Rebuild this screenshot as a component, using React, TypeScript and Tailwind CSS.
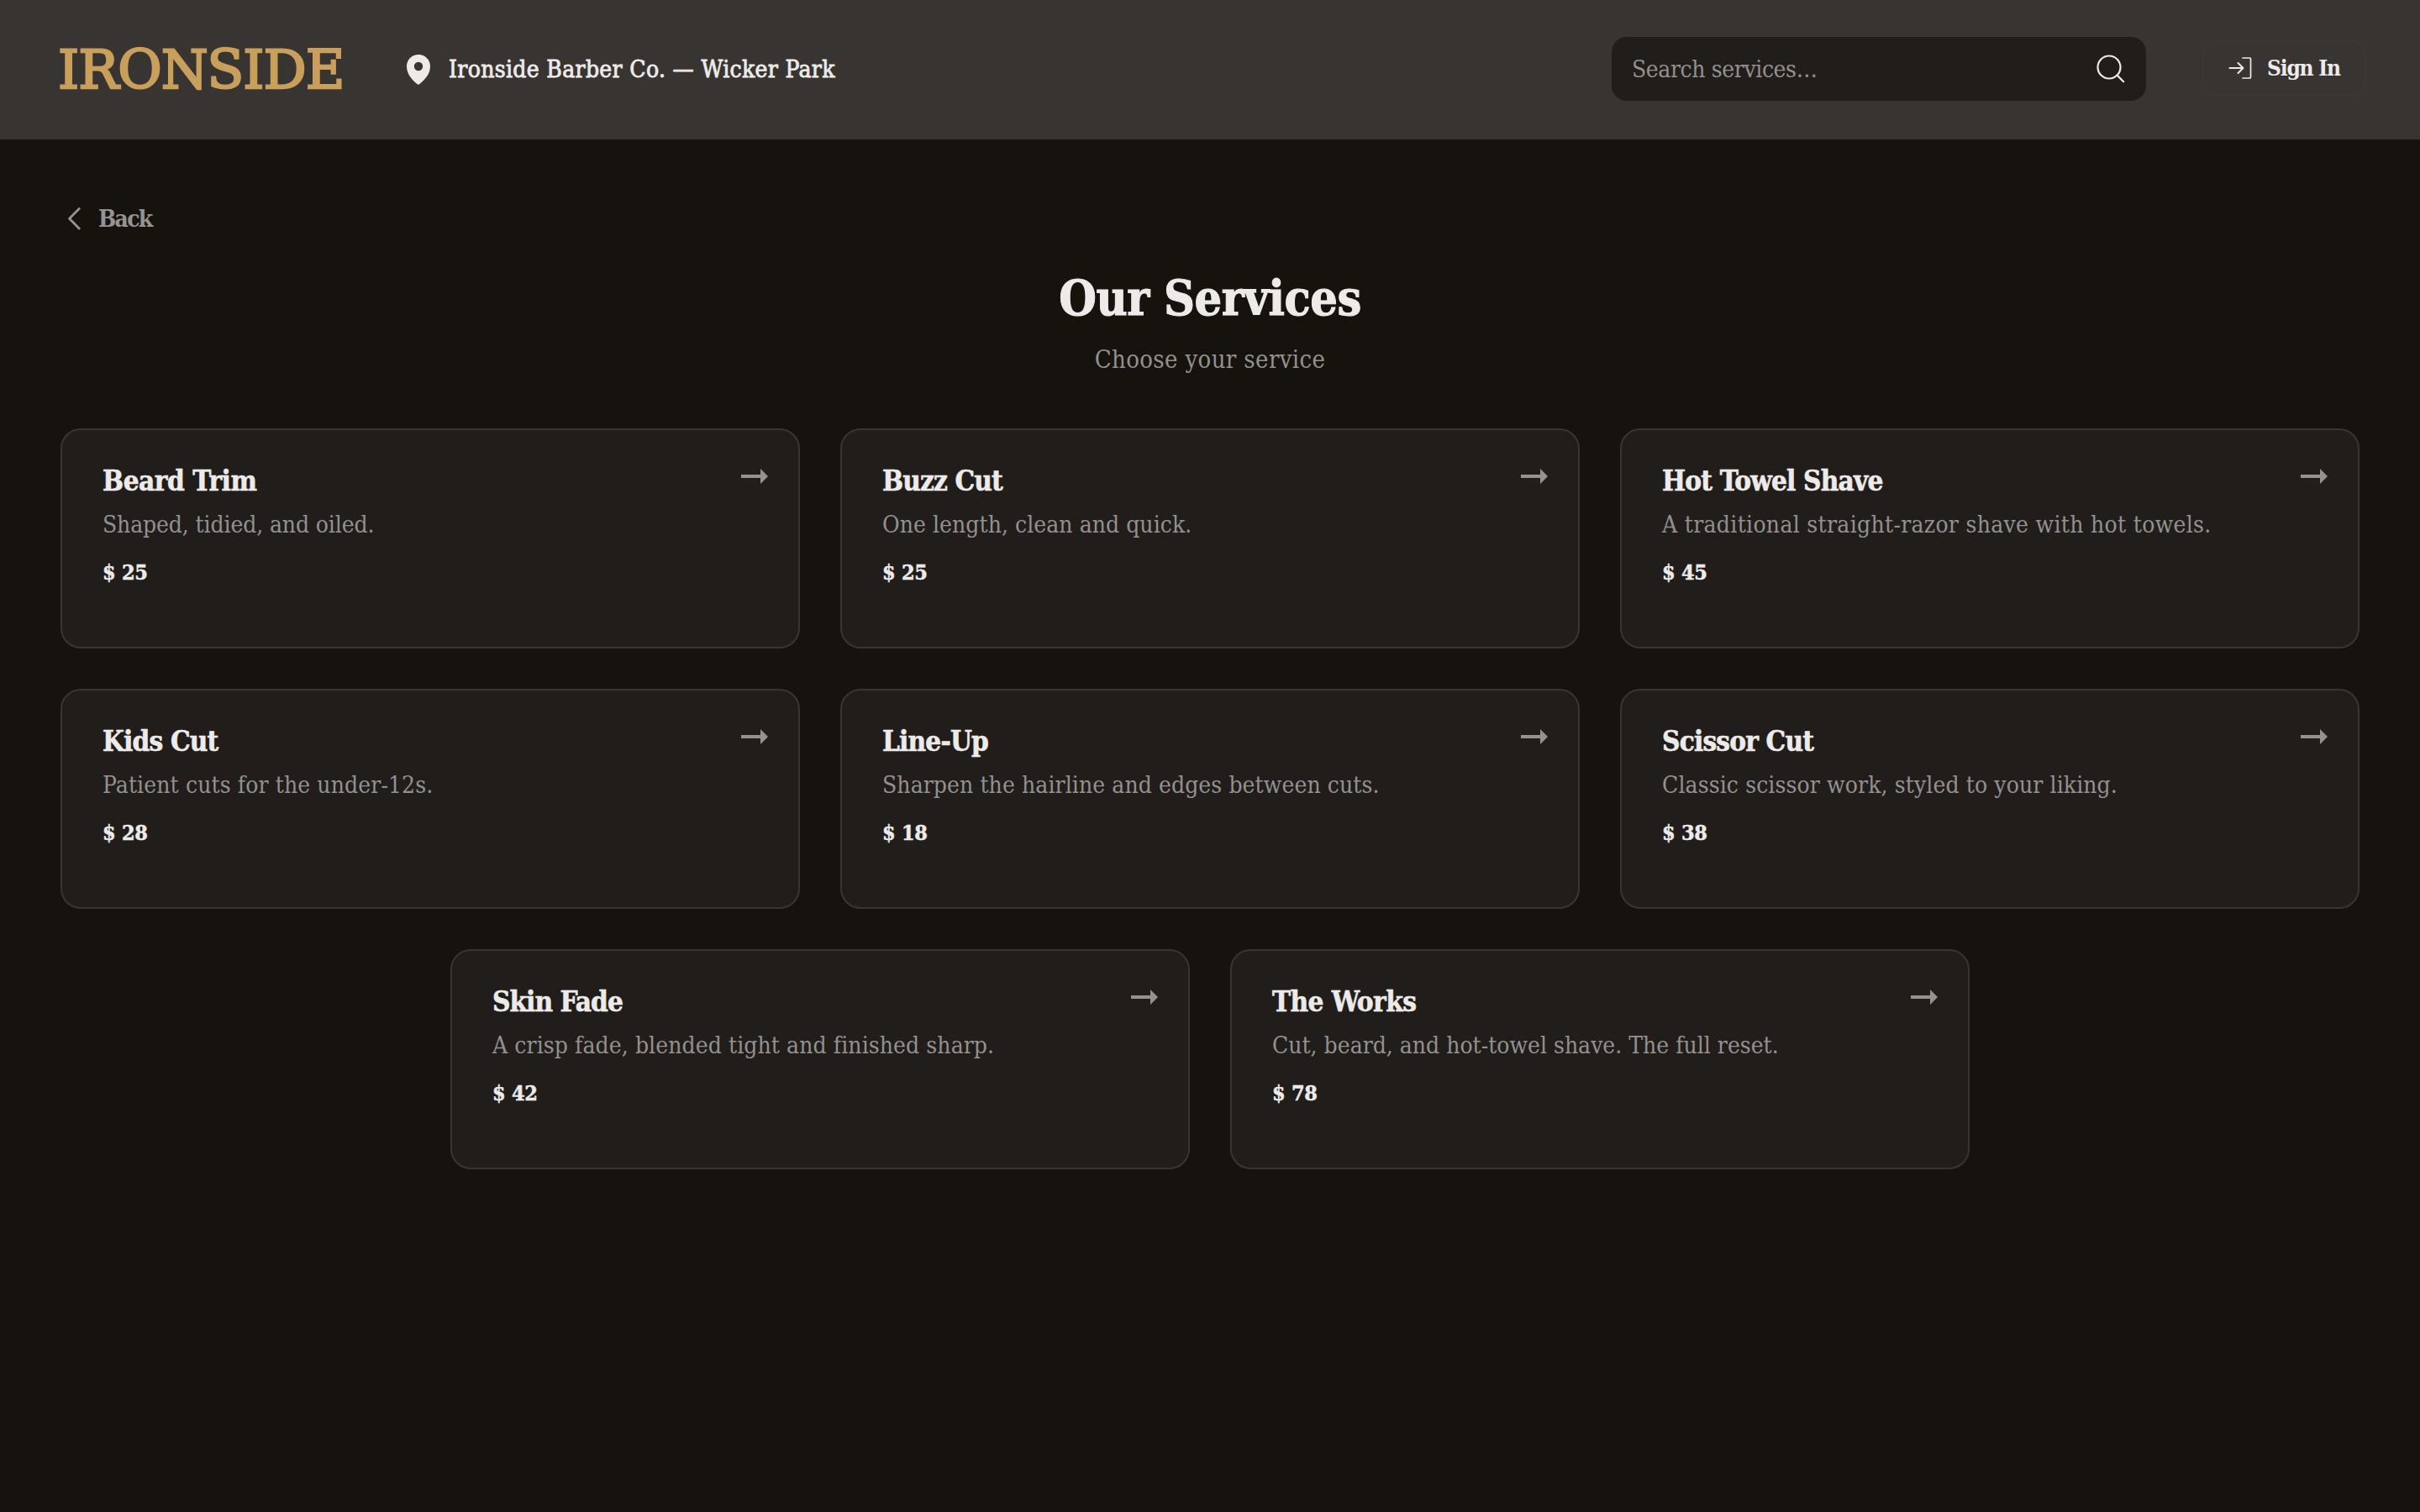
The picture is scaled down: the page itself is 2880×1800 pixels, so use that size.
import { clsx } from "clsx";

interface Service {
	name: string;
	description: string;
	price: number;
	nameTracking: string;
	descriptionTracking: string;
}

const services: Service[] = [
	{ name: "Beard Trim", description: "Shaped, tidied, and oiled.", price: 25, nameTracking: "tracking-[-0.46px]", descriptionTracking: "tracking-[-0.13px]" },
	{ name: "Buzz Cut", description: "One length, clean and quick.", price: 25, nameTracking: "tracking-[-0.85px]", descriptionTracking: "tracking-[0.05px]" },
	{ name: "Hot Towel Shave", description: "A traditional straight-razor shave with hot towels.", price: 45, nameTracking: "tracking-[-0.8px]", descriptionTracking: "tracking-[0.3px]" },
	{ name: "Kids Cut", description: "Patient cuts for the under-12s.", price: 28, nameTracking: "tracking-[-0.8px]", descriptionTracking: "tracking-[0.1px]" },
	{ name: "Line-Up", description: "Sharpen the hairline and edges between cuts.", price: 18, nameTracking: "tracking-[-0.8px]", descriptionTracking: "tracking-[0.08px]" },
	{ name: "Scissor Cut", description: "Classic scissor work, styled to your liking.", price: 38, nameTracking: "tracking-[-0.8px]", descriptionTracking: "tracking-[0.1px]" },
	{ name: "Skin Fade", description: "A crisp fade, blended tight and finished sharp.", price: 42, nameTracking: "tracking-[-0.95px]", descriptionTracking: "tracking-[0.08px]" },
	{ name: "The Works", description: "Cut, beard, and hot-towel shave. The full reset.", price: 78, nameTracking: "tracking-[-0.55px]", descriptionTracking: "tracking-[0px]" },
];

function PinIcon() {
	return (
		<svg width="28" height="36" viewBox="0 0 28 36" fill="currentColor">
			<path
				fillRule="evenodd"
				d="M14 0C6.2 0 0 6.1 0 13.9 0 23.5 7.2 31.2 14 36 20.8 31.2 28 23.5 28 13.9 28 6.1 21.8 0 14 0Zm0 8.8a5.2 5.2 0 1 1 0 10.4 5.2 5.2 0 0 1 0-10.4Z"
			/>
		</svg>
	);
}

function SearchIcon() {
	return (
		<svg width="34" height="34" viewBox="0 0 34 34" fill="none" stroke="currentColor" strokeWidth="2.2" strokeLinecap="round">
			<circle cx="15" cy="15" r="13.5" />
			<path d="M24.6 24.6 32.2 32.2" />
		</svg>
	);
}

function SignInIcon() {
	return (
		<svg width="28" height="28" viewBox="0 0 28 28" fill="none" stroke="currentColor" strokeWidth="2" strokeLinecap="round" strokeLinejoin="round">
			<path d="M1.5 14h16M11.5 8l6 6-6 6" />
			<path d="M17 2h8.5a1 1 0 0 1 1 1v22a1 1 0 0 1-1 1H17" strokeWidth="1.7" />
		</svg>
	);
}

function ChevronLeftIcon() {
	return (
		<svg width="16" height="28" viewBox="0 0 16 28" fill="none" stroke="currentColor" strokeWidth="2.8" strokeLinecap="round" strokeLinejoin="round">
			<path d="M14.2 1.4 2.6 13.2l11.6 11.8" />
		</svg>
	);
}

function ArrowIcon() {
	return (
		<svg width="32" height="18" viewBox="0 0 32 18" fill="currentColor" className="shrink-0">
			<path d="M0 7h23V0l9 9-9 9v-7H0Z" />
		</svg>
	);
}

function Header() {
	return (
		<header className="flex h-[166px] items-center bg-[#383431] pr-16 pl-[69px]">
			<div className="w-[415px] font-['DejaVu_Serif',serif] text-[64px] leading-none tracking-[-1.1px] whitespace-nowrap text-[#c99f5c] [-webkit-text-stroke:2.4px_#c99f5c]">
				IRONSIDE
			</div>
			<div className="flex items-center gap-[22px]">
				<PinIcon />
				<span className="text-[28px] leading-10 tracking-[0.33px] whitespace-nowrap [-webkit-text-stroke:0.8px_#edebe9]">Ironside Barber Co. — Wicker Park</span>
			</div>
			<div className="-mt-0.5 mr-[67px] ml-auto flex h-[76px] w-[636px] items-center justify-between rounded-[18px] bg-[#211d1a] pr-[25px] pl-6">
				<span className="pt-0.5 text-[28px] tracking-[-0.4px] text-[#93908e]">Search services…</span>
				<SearchIcon />
			</div>
			<button type="button" className="-mt-1 flex h-[66px] w-[195px] items-center gap-[18px] rounded-2xl border-2 border-[#3b3734] pl-[29px] text-[26px] font-bold tracking-[-1.2px] whitespace-nowrap">
				<SignInIcon />
				Sign In
			</button>
		</header>
	);
}

function ServiceCard({ service }: { service: Service }) {
	return (
		<article className="flex h-[262px] w-[880px] items-start justify-between rounded-3xl border-2 border-[#393533] bg-[#211d1b] pt-[39px] pr-9 pl-12">
			<div className="whitespace-nowrap">
				<h2 className={clsx("text-[33px] leading-[44px] font-bold [-webkit-text-stroke:0.6px_#edebe9]", service.nameTracking)}>{service.name}</h2>
				<p className={clsx("mt-[10px] text-[28px] leading-10 text-[#93918f]", service.descriptionTracking)}>{service.description}</p>
				<p className="mt-[17px] text-[25px] leading-10 font-bold tracking-[-0.3px] [-webkit-text-stroke:0.5px_#edebe9]">$ {service.price}</p>
			</div>
			<div className="pt-[7px] text-[#959391]">
				<ArrowIcon />
			</div>
		</article>
	);
}

export default function App() {
	return (
		<div className="h-[1800px] w-[2880px] overflow-hidden bg-[#16130e] font-['DejaVu_Serif_Condensed','DejaVu_Serif',serif] text-[#edebe9]">
			<Header />
			<main className="px-[72px] pt-[75px]">
				<button type="button" className="flex h-10 items-center gap-[21px] pl-2 text-[28px] font-bold tracking-[-1.7px] text-[#959391]">
					<ChevronLeftIcon />
					Back
				</button>
				<div className="mt-[38px] text-center">
					<h1 className="text-[57px] leading-[72px] font-bold tracking-[-0.5px] [-webkit-text-stroke:1px_#edebe9]">Our Services</h1>
					<p className="mt-[17px] text-[29px] leading-10 tracking-[0.37px] text-[#93918f]">Choose your service</p>
				</div>
				<div className="mt-[62px] flex flex-wrap justify-center gap-12">
					{services.map((service) => (
						<ServiceCard key={service.name} service={service} />
					))}
				</div>
			</main>
		</div>
	);
}
